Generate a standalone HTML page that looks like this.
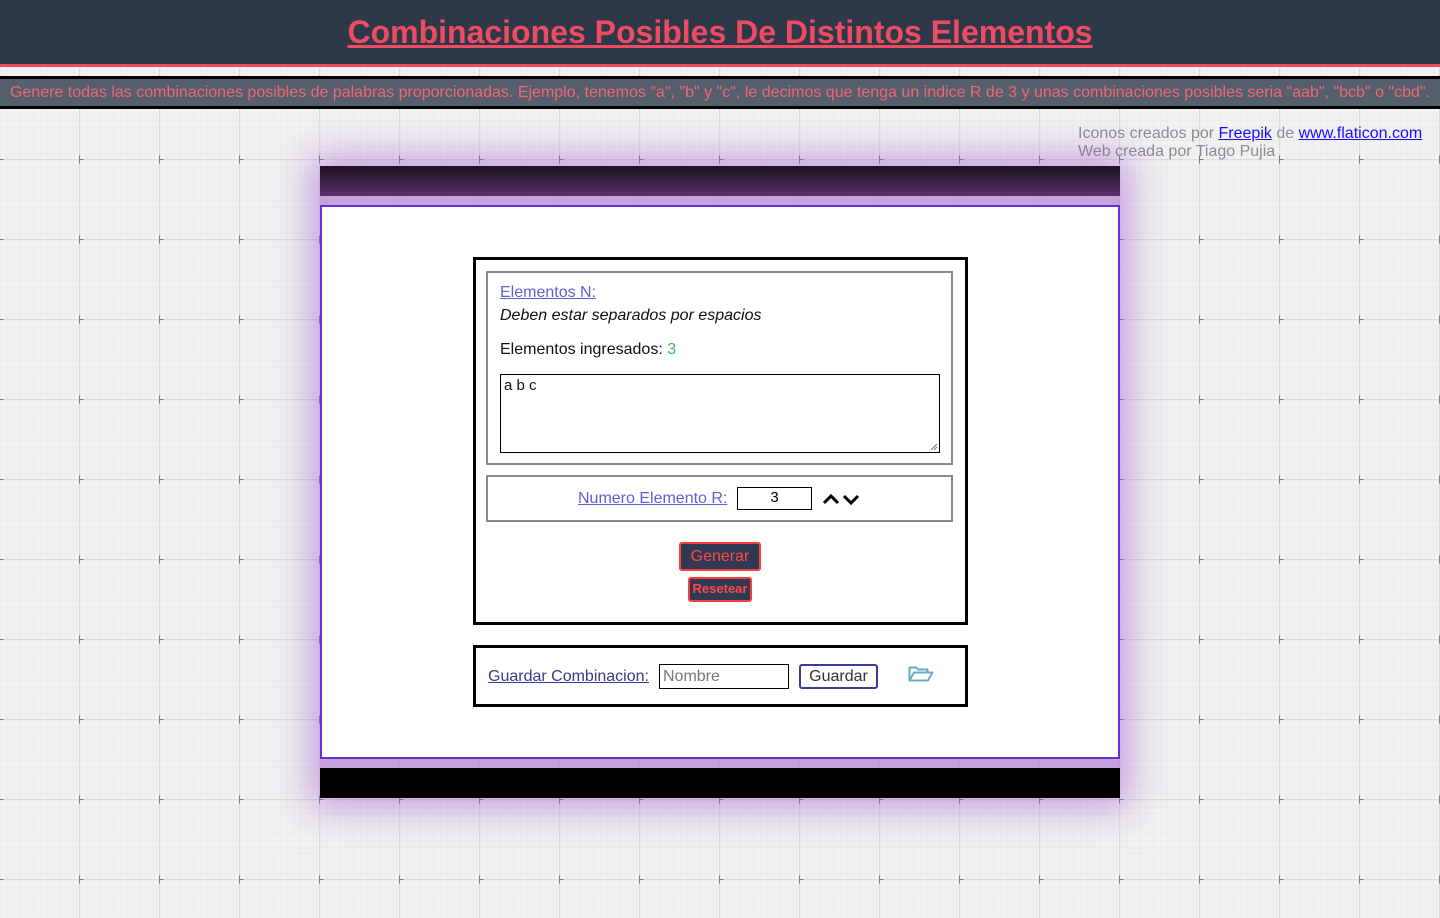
<!DOCTYPE html>
<html><head><meta charset="utf-8"><style>
*{box-sizing:border-box;margin:0;padding:0}
body{width:1440px;height:918px;position:relative;overflow:hidden;font-family:"Liberation Sans",Arial,sans-serif;background:#f2f2f2;}
.abs{position:absolute}
#grid{position:absolute;left:0;top:0}
.hdr{left:0;top:0;width:1440px;height:64px;background:#2d3948;text-align:center}
.hdr a{color:#ee4a62;font-size:32px;font-weight:bold;line-height:64px;text-decoration:underline}
.band{left:0;top:76px;width:1440px;height:33px;background:#555f6d;border-top:3px solid #000;border-bottom:3px solid #000;color:#f16672;font-size:16px;text-align:center;line-height:28px}
.credit{left:1078px;top:124px;color:#888c94;font-size:16px;line-height:18px}
.credit a{color:#1a0dff}
.lbl{color:#6060d6;text-decoration:underline}
</style></head><body>
<svg id="grid" width="1440" height="918">
<defs>
<pattern id="mn" width="6.6667" height="6.6667" patternUnits="userSpaceOnUse"><path d="M0 0H6.6667M0 0V6.6667" stroke="#e6e6e6" stroke-width="1" fill="none"/></pattern>
<pattern id="mj" x="-1" y="-1" width="80" height="80" patternUnits="userSpaceOnUse"><path d="M0.5 0V80M0 0.5H80" stroke="#dddddd" stroke-width="1" fill="none"/><path d="M0.5 -3.5V4.5M-3.5 0.5H4.5M80.5 -3.5V4.5" stroke="#7a7a7a" stroke-width="1"/><path d="M-3.5 80.5H4.5M0.5 76.5V84.5" stroke="#7a7a7a"/></pattern>
</defs>
<rect width="1440" height="918" fill="url(#mn)"/>
<rect width="1440" height="918" fill="url(#mj)"/>
</svg>
<div class="abs hdr"><a>Combinaciones Posibles De Distintos Elementos</a></div>
<div class="abs" style="left:0;top:64px;width:1440px;height:3px;background:#ee4a62"></div>
<div class="abs band">Genere todas las combinaciones posibles de palabras proporcionadas. Ejemplo, tenemos "a", "b" y "c", le decimos que tenga un indice R de 3 y unas combinaciones posibles seria "aab", "bcb" o "cbd".</div>
<div class="abs credit" style="top:125px">Iconos creados por <a href="#">Freepik</a> de <a href="#">www.flaticon.com</a><br>Web creada por Tiago Pujia</div>

<div class="abs" style="left:320px;top:166px;width:800px;height:632px;box-shadow:0 0 35px 10px rgba(160,90,205,0.55);background:rgba(180,130,210,0.7)"></div>
<div class="abs" style="left:320px;top:166px;width:800px;height:30px;background:linear-gradient(#1c1220,#5a3068)"></div>
<div class="abs" style="left:320px;top:205px;width:800px;height:554px;background:#fff;border:2px solid #6630d4"></div>
<div class="abs" style="left:320px;top:768px;width:800px;height:30px;background:#000"></div>

<div class="abs" style="left:473px;top:257px;width:495px;height:368px;border:3px solid #000"></div>
<div class="abs" style="left:486px;top:271px;width:467px;height:194px;border:2px solid #8a8a8a"></div>
<div class="abs lbl" style="left:500px;top:284px;font-size:16px">Elementos N:</div>
<div class="abs" style="left:500px;top:307px;font-size:16px;font-style:italic;color:#111">Deben estar separados por espacios</div>
<div class="abs" style="left:500px;top:341px;font-size:16px;color:#111">Elementos ingresados: <span style="color:#3cba54">3</span></div>
<div class="abs" style="left:500px;top:374px;width:440px;height:79px;border:1px solid #000;font-size:15px;padding:2px 3px;color:#111">a b c
<svg class="abs" style="right:1px;bottom:1px" width="8" height="8"><path d="M7 1L1 7M7 4L4 7" stroke="#777"/></svg></div>

<div class="abs" style="left:486px;top:475px;width:467px;height:47px;border:2px solid #8a8a8a"></div>
<div class="abs lbl" style="left:578px;top:490px;font-size:16px">Numero Elemento R:</div>
<div class="abs" style="left:737px;top:487px;width:75px;height:23px;border:1px solid #000;text-align:center;font-size:15px;line-height:19px">3</div>
<svg class="abs" style="left:822px;top:490px" width="40" height="16"><path d="M2 13L9 6L16 13M22 6L29 13L36 6" stroke="#000" stroke-width="3" fill="none"/></svg>

<div class="abs" style="left:679px;top:542px;width:82px;height:29px;background:#2f3a52;border:2px solid #ff3b3b;border-radius:3px;color:#ff4848;font-size:16px;text-align:center;line-height:26px">Generar</div>
<div class="abs" style="left:688px;top:577px;width:64px;height:25px;background:#2f3a52;border:2px solid #ff3b3b;border-radius:3px;color:#ff4848;font-size:13px;font-weight:bold;text-align:center;line-height:20px">Resetear</div>

<div class="abs" style="left:473px;top:645px;width:495px;height:62px;border:3px solid #000"></div>
<div class="abs" style="left:488px;top:668px;font-size:16px;color:#3a3a8a;text-decoration:underline;text-decoration-color:#3a3a9a">Guardar Combinacion:</div>
<div class="abs" style="left:659px;top:664px;width:130px;height:25px;border:1px solid #000;font-size:16px;color:#777;padding-left:3px;line-height:24px">Nombre</div>
<div class="abs" style="left:799px;top:664px;width:79px;height:25px;border:2px solid #3a3a99;border-radius:3px;font-size:16px;color:#333;text-align:center;line-height:22px">Guardar</div>
<svg class="abs" style="left:908px;top:665px" width="26" height="18"><path d="M1.5 15.5V2.5H8L10 4.5H19.5V7.5M1.5 15.5L6 7.5H24.5L20 15.5Z" stroke="#6aaac8" stroke-width="2" fill="none" stroke-linejoin="round"/></svg>
</body></html>
